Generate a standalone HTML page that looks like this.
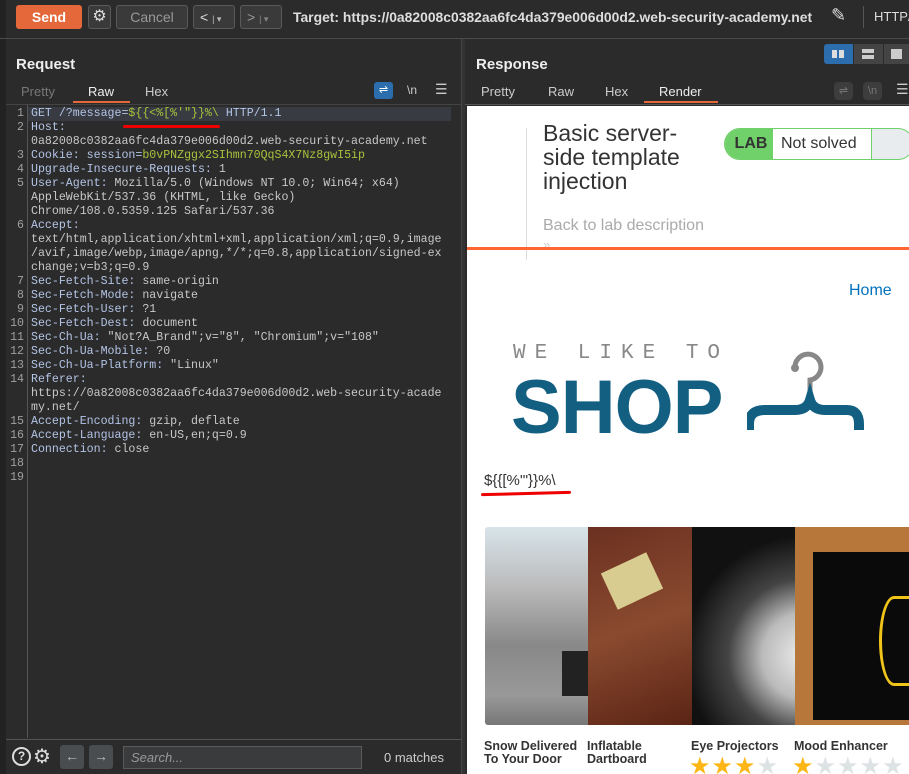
<!DOCTYPE html>
<html><head><meta charset="utf-8">
<style>
*{margin:0;padding:0;box-sizing:border-box}
body{width:909px;height:774px;overflow:hidden;background:#2b2b2b;font-family:"Liberation Sans",sans-serif;position:relative;color:#ddd}
.a{position:absolute}
.btn{position:absolute;border:1px solid #5a5a5a;border-radius:3px;background:#3a3a3a}
.code{position:absolute;left:31px;top:107px;font-family:"Liberation Mono",monospace;font-size:11.6px;line-height:14px;color:#c8c8c8;white-space:pre}
.ln{position:absolute;left:0;width:24px;top:107px;font-family:"Liberation Mono",monospace;font-size:11.6px;line-height:14px;color:#a0a0a0;text-align:right;white-space:pre}
.k{color:#b3c4e6}.g{color:#a8c23c}
.tab{position:absolute;font-size:13px;color:#ccc}
.star{color:#fdb614;font-size:24px}.st0{color:#dde2e4;font-size:24px}
</style></head><body>
<div class="a" style="left:0;top:0;width:6px;height:774px;background:#222"></div>
<div class="a" style="left:16px;top:5px;width:66px;height:24px;background:#e4683a;border-radius:3px;color:#fff;font-weight:bold;font-size:14px;text-align:center;line-height:24px">Send</div>
<div class="btn" style="left:88px;top:5px;width:23px;height:24px;color:#ddd;font-size:16px;text-align:center;line-height:22px">⚙</div>
<div class="btn" style="left:116px;top:5px;width:72px;height:24px;color:#999;font-size:14px;text-align:center;line-height:22px">Cancel</div>
<div class="btn" style="left:193px;top:5px;width:42px;height:24px;color:#ddd;font-size:14px;line-height:22px;padding-left:6px">&lt; <span style="font-size:9px;color:#bbb">| ▾</span></div>
<div class="btn" style="left:240px;top:5px;width:42px;height:24px;color:#999;font-size:14px;line-height:22px;padding-left:6px">&gt; <span style="font-size:9px;color:#888">| ▾</span></div>
<div class="a" style="left:293px;top:9px;font-size:13.9px;font-weight:bold;color:#ddd;white-space:nowrap">Target: https://0a82008c0382aa6fc4da379e006d00d2.web-security-academy.net</div>
<div class="a" style="left:831px;top:5px;font-size:18px;color:#ddd">✎</div>
<div class="a" style="left:863px;top:6px;width:1px;height:22px;background:#555"></div>
<div class="a" style="left:874px;top:9px;font-size:13px;color:#ddd">HTTP/</div>
<div class="a" style="left:0;top:38px;width:909px;height:1px;background:#4a4a4a"></div>
<div class="a" style="left:461px;top:39px;width:4px;height:735px;background:#333;border-left:1px solid #444"></div>
<div class="a" style="left:16px;top:56px;font-size:15px;font-weight:bold;color:#eee">Request</div>
<div class="tab" style="left:21px;top:84px;color:#777">Pretty</div>
<div class="tab" style="left:88px;top:84px;color:#eee">Raw</div>
<div class="a" style="left:73px;top:101px;width:57px;height:2px;background:#e4683a"></div>
<div class="tab" style="left:145px;top:84px;color:#ccc">Hex</div>
<div class="a" style="left:374px;top:82px;width:19px;height:17px;background:#2c6dad;border-radius:3px;color:#fff;font-size:11px;text-align:center;line-height:17px">⇌</div>
<div class="tab" style="left:407px;top:83px;font-size:12px">\n</div>
<div class="tab" style="left:435px;top:81px;font-size:14px">☰</div>
<div class="a" style="left:6px;top:104px;width:455px;height:1px;background:#444"></div>
<div class="a" style="left:27px;top:105px;width:1px;height:633px;background:#555"></div>
<div class="a" style="left:28px;top:107px;width:423px;height:14px;background:#383c42"></div>
<div class="ln">1
2

3
4
5


6



7
8
9
10
11
12
13
14


15
16
17
18
19</div>
<div class="code"><span class="k">GET /?message=</span><span class="g">${{&lt;%[%'"}}%\</span><span class="k"> HTTP/1.1</span>
<span class="k">Host:</span>
0a82008c0382aa6fc4da379e006d00d2.web-security-academy.net
<span class="k">Cookie: session=</span><span class="g">b0vPNZggx2SIhmn70QqS4X7Nz8gwI5ip</span>
<span class="k">Upgrade-Insecure-Requests:</span> 1
<span class="k">User-Agent:</span> Mozilla/5.0 (Windows NT 10.0; Win64; x64)
AppleWebKit/537.36 (KHTML, like Gecko)
Chrome/108.0.5359.125 Safari/537.36
<span class="k">Accept:</span>
text/html,application/xhtml+xml,application/xml;q=0.9,image
/avif,image/webp,image/apng,*/*;q=0.8,application/signed-ex
change;v=b3;q=0.9
<span class="k">Sec-Fetch-Site:</span> same-origin
<span class="k">Sec-Fetch-Mode:</span> navigate
<span class="k">Sec-Fetch-User:</span> ?1
<span class="k">Sec-Fetch-Dest:</span> document
<span class="k">Sec-Ch-Ua:</span> "Not?A_Brand";v="8", "Chromium";v="108"
<span class="k">Sec-Ch-Ua-Mobile:</span> ?0
<span class="k">Sec-Ch-Ua-Platform:</span> "Linux"
<span class="k">Referer:</span>
https://0a82008c0382aa6fc4da379e006d00d2.web-security-acade
my.net/
<span class="k">Accept-Encoding:</span> gzip, deflate
<span class="k">Accept-Language:</span> en-US,en;q=0.9
<span class="k">Connection:</span> close</div>
<div class="a" style="left:123px;top:125px;width:97px;height:3px;background:#e00;border-radius:2px"></div>
<div class="a" style="left:6px;top:739px;width:455px;height:1px;background:#555"></div>
<div class="a" style="left:12px;top:747px;width:19px;height:19px;border:2px solid #ddd;border-radius:50%;font-size:12px;font-weight:bold;text-align:center;line-height:15px">?</div>
<div class="a" style="left:33px;top:744px;font-size:20px;color:#ddd">⚙</div>
<div class="a" style="left:60px;top:745px;width:24px;height:24px;background:#4a4d50;border-radius:3px;color:#bbb;text-align:center;line-height:23px;font-size:14px">←</div>
<div class="a" style="left:89px;top:745px;width:24px;height:24px;background:#4a4d50;border-radius:3px;color:#bbb;text-align:center;line-height:23px;font-size:14px">→</div>
<div class="a" style="left:123px;top:746px;width:239px;height:23px;background:#3a3b3d;border:1px solid #5a5a5a;color:#999;font-style:italic;font-size:13px;padding-left:7px;line-height:21px">Search...</div>
<div class="a" style="left:384px;top:750px;font-size:13px;color:#ccc">0 matches</div>
<div class="a" style="left:476px;top:56px;font-size:15px;font-weight:bold;color:#eee">Response</div>
<div class="a" style="left:824px;top:44px;width:29px;height:20px;background:#2c6dad;border-radius:3px 0 0 3px"></div>
<div class="a" style="left:832px;top:50px;width:5px;height:8px;background:#ddd"></div><div class="a" style="left:839px;top:50px;width:5px;height:8px;background:#ddd"></div>
<div class="a" style="left:854px;top:44px;width:29px;height:20px;background:#444"></div>
<div class="a" style="left:862px;top:49px;width:12px;height:4px;background:#ccc"></div><div class="a" style="left:862px;top:55px;width:12px;height:4px;background:#ccc"></div>
<div class="a" style="left:884px;top:44px;width:25px;height:20px;background:#444"></div>
<div class="a" style="left:891px;top:49px;width:11px;height:10px;background:#ccc"></div>
<div class="tab" style="left:481px;top:84px">Pretty</div>
<div class="tab" style="left:548px;top:84px">Raw</div>
<div class="tab" style="left:605px;top:84px">Hex</div>
<div class="tab" style="left:659px;top:84px;color:#eee">Render</div>
<div class="a" style="left:644px;top:101px;width:74px;height:2px;background:#e4683a"></div>
<div class="a" style="left:834px;top:82px;width:19px;height:18px;background:#3d3d3d;border-radius:4px;color:#777;text-align:center;font-size:11px;line-height:18px">⇌</div>
<div class="a" style="left:863px;top:82px;width:19px;height:18px;background:#3d3d3d;border-radius:4px;color:#777;text-align:center;font-size:11px;line-height:18px">\n</div>
<div class="tab" style="left:896px;top:81px;font-size:14px">☰</div>
<div class="a" style="left:465px;top:104px;width:444px;height:1px;background:#555"></div>
<div class="a" style="left:467px;top:106px;width:442px;height:668px;background:#fff;overflow:hidden">
 <div class="a" style="left:59px;top:22px;width:1px;height:132px;background:#ddd"></div>
 <div class="a" style="left:76px;top:15px;font-size:23px;line-height:24px;color:#333">Basic server-<br>side template<br>injection</div>
 <div class="a" style="left:76px;top:111px;font-size:16px;color:#aaa">Back to lab description</div>
 <div class="a" style="left:76px;top:131px;font-size:13px;color:#ccc">»</div>
 <div class="a" style="left:0;top:141px;width:442px;height:3px;background:#ff6633"></div>
 <div class="a" style="left:257px;top:22px;width:190px;height:32px;border:1px solid #70d06a;border-radius:16px;overflow:hidden;background:#e9ecef">
  <div class="a" style="left:0;top:0;width:48px;height:30px;background:#70d06a;color:#333;font-weight:bold;font-size:16px;line-height:30px;text-align:center;padding-left:4px">LAB</div>
  <div class="a" style="left:48px;top:0;width:99px;height:30px;background:#fff;border-right:1px solid #70d06a;color:#333;font-size:16px;line-height:30px;padding-left:8px">Not solved</div>
 </div>
 <div class="a" style="left:382px;top:176px;font-size:16px;color:#0071bc">Home</div>
 <div class="a" style="left:46px;top:236px;font-family:'Liberation Mono',monospace;font-size:21px;letter-spacing:9px;color:#888">WE LIKE TO</div>
 <div class="a" style="left:44px;top:252px;font-size:76px;font-weight:bold;color:#135f82;letter-spacing:-1px;line-height:100px">SHOP</div>
 <svg class="a" style="left:280px;top:236px" width="130" height="90" viewBox="0 0 130 90">
  <circle cx="48" cy="26" r="4" fill="#888"/>
  <path d="M48 26 A13 13 0 1 1 63 38 V54" fill="none" stroke="#888" stroke-width="5"/>
  <path d="M2 88 V82 Q2 68 18 68 H48 Q60 68 63 58 Q66 68 78 68 H100 Q112 68 112 82 V88" fill="none" stroke="#135f82" stroke-width="10"/>
 </svg>
 <div class="a" style="left:17px;top:366px;font-size:15px;color:#333">${{[%'"}}%\</div>
 <div class="a" style="left:14px;top:386px;width:90px;height:3px;background:#e00;border-radius:2px;transform:rotate(-1.5deg)"></div>
 <div class="a" style="left:18px;top:421px;width:103px;height:198px;background:linear-gradient(180deg,#d8e4ea 0%,#bbb 30%,#888 60%,#999 85%,#777 100%);border-radius:3px 0 0 3px"></div>
 <div class="a" style="left:95px;top:545px;width:26px;height:45px;background:#222"></div>
 <div class="a" style="left:121px;top:421px;width:104px;height:198px;background:linear-gradient(160deg,#6b3020,#8a4a30 50%,#5a2414)"></div>
 <div class="a" style="left:140px;top:455px;width:50px;height:40px;background:#d9cc90;transform:rotate(-25deg)"></div>
 <div class="a" style="left:225px;top:421px;width:103px;height:198px;background:radial-gradient(circle at 110% 65%,#eee 0%,#bbb 25%,#444 45%,#111 70%)"></div>
 <div class="a" style="left:328px;top:421px;width:114px;height:198px;background:#b8773a"></div>
 <div class="a" style="left:346px;top:446px;width:96px;height:168px;background:#0a0a0a"></div>
 <div class="a" style="left:412px;top:490px;width:30px;height:90px;border:3px solid #f0c419;border-right:none;border-radius:50% 0 0 50%"></div>
 <div class="a" style="left:17px;top:634px;font-size:12.5px;font-weight:bold;line-height:13px;color:#333">Snow Delivered<br>To Your Door</div>
 <div class="a" style="left:120px;top:634px;font-size:12.5px;font-weight:bold;line-height:13px;color:#333">Inflatable<br>Dartboard</div>
 <div class="a" style="left:224px;top:634px;font-size:12.5px;font-weight:bold;line-height:13px;color:#333">Eye Projectors</div>
 <div class="a" style="left:327px;top:634px;font-size:12.5px;font-weight:bold;line-height:13px;color:#333">Mood Enhancer</div>
 <div class="a" style="left:222px;top:646px;white-space:nowrap;letter-spacing:1px"><span class="star">★★★</span><span class="st0">★</span></div>
 <div class="a" style="left:325px;top:646px;white-space:nowrap;letter-spacing:1px"><span class="star">★</span><span class="st0">★★★★</span></div>
</div>
</body></html>
